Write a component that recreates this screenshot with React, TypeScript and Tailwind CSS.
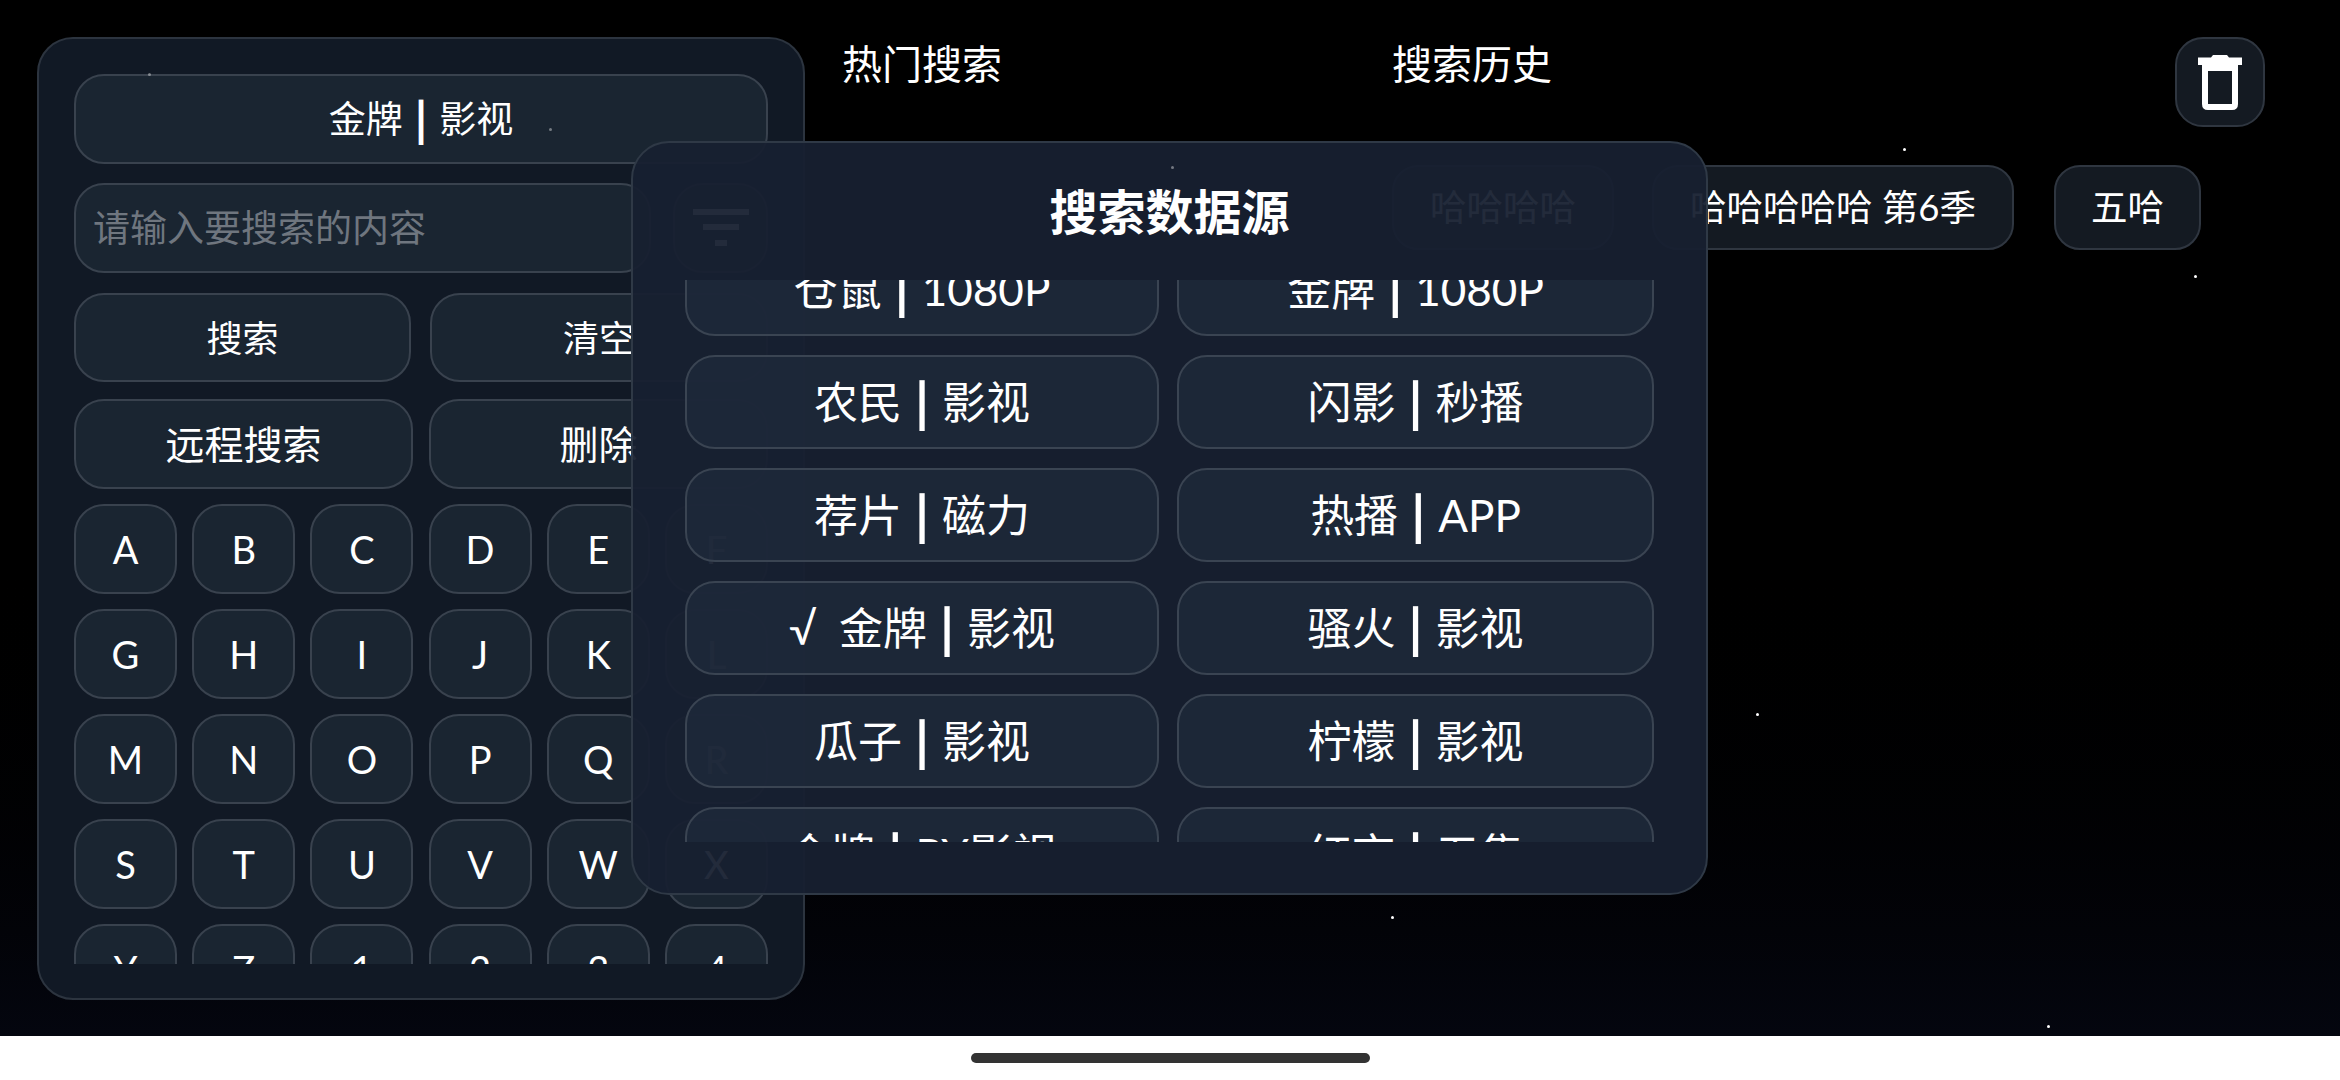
import type { ReactNode } from 'react';

const keyRows = [
  ['A', 'B', 'C', 'D', 'E', 'F'],
  ['G', 'H', 'I', 'J', 'K', 'L'],
  ['M', 'N', 'O', 'P', 'Q', 'R'],
  ['S', 'T', 'U', 'V', 'W', 'X'],
  ['Y', 'Z', '1', '2', '3', '4'],
];

const sources = [
  ['仓鼠 | 1080P', '金牌 | 1080P'],
  ['农民 | 影视', '闪影 | 秒播'],
  ['荐片 | 磁力', '热播 | APP'],
  ['√  金牌 | 影视', '骚火 | 影视'],
  ['瓜子 | 影视', '柠檬 | 影视'],
  ['金牌 | PY影视', '红京 | 五集'],
];

const stars = [
  { x: 148, y: 73, dim: true },
  { x: 549, y: 128, dim: true },
  { x: 1171, y: 166, dim: true },
  { x: 1903, y: 148, dim: false },
  { x: 2194, y: 275, dim: false },
  { x: 1756, y: 713, dim: false },
  { x: 1391, y: 916, dim: false },
  { x: 2047, y: 1025, dim: false },
];

function PanelButton({ className, children }: { className: string; children: ReactNode }) {
  return (
    <div className={`flex items-center justify-center rounded-[30px] border-2 border-[#39424e] bg-[#1a2531] text-white ${className}`}>
      {children}
    </div>
  );
}

// site name, heavy divider, category
function SourceLabel({ text, barClass }: { text: string; barClass: string }) {
  const [name, kind] = text.split(' | ');
  return (
    <>
      <span>{name}</span>
      <span className={`leading-none font-bold ${barClass}`}>|</span>
      <span>{kind}</span>
    </>
  );
}

function TrashIcon() {
  return (
    <svg width="44" height="55" viewBox="0 0 44 55" fill="none">
      <path d="M0 10V2.5H13L15 0H29L31 2.5H44V10Z" fill="#fff" />
      <path d="M7 13V49Q7 52 10 52H34Q37 52 37 49V13Z" stroke="#fff" strokeWidth="6" />
    </svg>
  );
}

function FilterIcon() {
  return (
    <svg width="56" height="38" viewBox="0 0 56 38" fill="#fff">
      <rect x="0" y="0" width="56" height="6" />
      <rect x="10" y="15" width="36" height="6" />
      <rect x="22" y="31" width="12" height="6" />
    </svg>
  );
}

function SearchPanel() {
  return (
    <div className="flex h-[963px] w-[768px] shrink-0 flex-col rounded-[36px] border-2 border-[#2c343f] bg-[#111925] px-[35px] pt-[35px]">
      <PanelButton className="h-[90px] shrink-0 text-[37px]">
        <SourceLabel text="金牌 | 影视" barClass="mx-[12px] text-[48px]" />
      </PanelButton>
      <div className="mt-[19px] flex h-[90px] shrink-0 gap-[22px]">
        <div className="flex flex-1 items-center rounded-[30px] border-2 border-[#39424e] bg-[#1a2531] pl-[17px] text-[37px] text-[#6f767f]">
          请输入要搜索的内容
        </div>
        <PanelButton className="w-[95px]">
          <FilterIcon />
        </PanelButton>
      </div>
      <div className="mt-[20px] flex h-[89px] shrink-0 gap-[19px]">
        <PanelButton className="w-[337px] text-[36px]">搜索</PanelButton>
        <PanelButton className="flex-1 text-[36px]">清空</PanelButton>
      </div>
      <div className="mt-[17px] flex h-[90px] shrink-0 gap-[16px]">
        <PanelButton className="w-[339px] text-[39px]">远程搜索</PanelButton>
        <PanelButton className="flex-1 text-[39px]">删除</PanelButton>
      </div>
      <div className="mt-[15px] flex h-[460px] shrink-0 flex-col gap-[15px] overflow-hidden">
        {keyRows.map((row) => (
          <div key={row[0]} className="flex shrink-0 justify-between">
            {row.map((k) => (
              <PanelButton key={k} className="h-[90px] w-[103px] shrink-0 text-[38px]">
                {k}
              </PanelButton>
            ))}
          </div>
        ))}
      </div>
    </div>
  );
}

function SourceModal() {
  return (
    <div className="absolute top-[141px] left-[631px] flex h-[754px] w-[1077px] flex-col rounded-[38px] border-2 border-[#2f3946] bg-[#172030]/95 px-[52px]">
      <div className="flex h-[137px] shrink-0 items-center justify-center text-[48px] font-bold text-white">
        搜索数据源
      </div>
      <div className="h-[562px] shrink-0 overflow-hidden">
        <div className="mt-[-38px] flex flex-col gap-[19px]">
          {sources.map((row) => (
            <div key={row[0]} className="grid shrink-0 grid-cols-[474px_1fr] gap-[18px]">
              {row.map((s) => (
                <div
                  key={s}
                  className="flex h-[94px] items-center justify-center rounded-[30px] border-2 border-[#3a4452] bg-[#1f2b3c]/70 text-[44px] whitespace-pre text-white"
                >
                  <SourceLabel text={s} barClass="mx-[13px] text-[54px]" />
                </div>
              ))}
            </div>
          ))}
        </div>
      </div>
    </div>
  );
}

export default function App() {
  return (
    <div className="flex h-[1080px] w-[2340px] flex-col overflow-hidden bg-white font-['Lato','Noto_Sans_CJK_SC',sans-serif]">
      <div className="relative flex h-[1036px] shrink-0 bg-gradient-to-b from-[#000000] via-[#000000] to-[#04060f] pt-[37px] pl-[37px]">
        <SearchPanel />

        <div className="w-[587px] shrink-0 pl-[37px] text-[40px] leading-[54px] text-white">热门搜索</div>

        <div className="flex-1">
          <div className="text-[40px] leading-[54px] text-white">搜索历史</div>
          <div className="mt-[74px] flex items-center text-[36.5px] text-white">
            <div className="flex h-[85px] items-center rounded-[26px] border-2 border-[#2f3640] bg-[#141a22] px-[36px]">哈哈哈哈</div>
            <div className="ml-[38px] flex h-[85px] items-center rounded-[26px] border-2 border-[#2f3640] bg-[#141a22] px-[36px]">哈哈哈哈哈 第6季</div>
            <div className="ml-[40px] flex h-[85px] items-center rounded-[26px] border-2 border-[#2f3640] bg-[#141a22] px-[35px]">五哈</div>
          </div>
        </div>

        <div className="absolute top-[37px] right-[75px] flex h-[90px] w-[90px] items-center justify-center rounded-[28px] border-2 border-[#2f3640] bg-[#141a22]">
          <TrashIcon />
        </div>

        <SourceModal />

        {stars.map((s) => (
          <span
            key={s.x}
            className={s.dim ? 'absolute h-[3px] w-[3px] rounded-full bg-white/40' : 'absolute h-[3px] w-[3px] rounded-full bg-white'}
            style={{ left: s.x, top: s.y }}
          />
        ))}
      </div>
      <div className="flex flex-1 items-center justify-center">
        <div className="h-[10px] w-[399px] rounded-full bg-[#333333]" />
      </div>
    </div>
  );
}
